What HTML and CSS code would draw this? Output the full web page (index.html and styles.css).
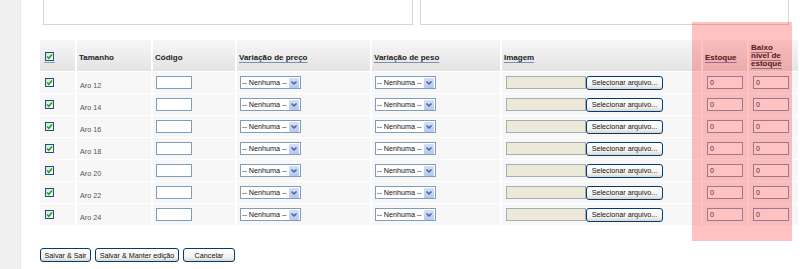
FILE: index.html
```html
<!DOCTYPE html>
<html lang="pt-BR">
  <head>
    <meta charset="UTF-8" />
    <title>Variações</title>
    <link rel="stylesheet" href="styles.css">
  </head>
  <body>
    <div class="page">
      <aside class="rail"></aside>

      <div class="content">
        <div class="boxes">
          <div class="box box-l"></div>
          <div class="box box-r"></div>
        </div>

        <table class="grid">
          <colgroup>
            <col class="c1"><col class="c2"><col class="c3"><col class="c4">
            <col class="c5"><col class="c6"><col class="c7"><col class="c8">
          </colgroup>
          <thead>
            <tr>
              <th class="chk"><span class="chk-link"><span class="cb"><svg viewBox="0 0 9 9" width="9" height="9"><path d="M2 4.5 L3.8 6.3 L7 2.6" fill="none" stroke="#1fa31f" stroke-width="1.6"/></svg></span></span></th>
              <th>Tamanho</th>
              <th>Código</th>
              <th><a class="sort">Variação de preço</a></th>
              <th><a class="sort">Variação de peso</a></th>
              <th><a class="sort">Imagem</a></th>
              <th><a class="sort">Estoque</a></th>
              <th class="low"><a class="sort">Baixo<br>nível de<br>estoque</a></th>
            </tr>
          </thead>
          <tbody>
          </tbody>
        </table>

        <div class="actions">
          <button class="btn b1">Salvar &amp; Sair</button>
          <button class="btn b2">Salvar &amp; Manter edição</button>
          <button class="btn b3">Cancelar</button>
        </div>
      </div>

      <div class="highlight"></div>
    </div>

    <script>
      let elBody = document.querySelector(".grid > tbody");
      let sizes = [12, 14, 16, 18, 20, 22, 24];
      let check = '<span class="cb"><svg viewBox="0 0 9 9" width="9" height="9"><path d="M2 4.5 L3.8 6.3 L7 2.6" fill="none" stroke="#1fa31f" stroke-width="1.6"/></svg></span>';
      let arrow = '<span class="arr"><svg viewBox="0 0 8 6" width="8" height="6"><path d="M1.5 1.5 L4 4 L6.5 1.5" fill="none" stroke="#4d6185" stroke-width="1.5"/></svg></span>';
      let sel = '<span class="sel"><span class="sel-txt">-- Nenhuma --</span>' + arrow + '</span>';
      sizes.forEach(function (size) {
        let tr = document.createElement("tr");
        tr.innerHTML =
          '<td class="chk">' + check + '</td>' +
          '<td class="name">Aro ' + size + '</td>' +
          '<td><input class="txt code" type="text"></td>' +
          '<td>' + sel + '</td>' +
          '<td>' + sel + '</td>' +
          '<td><span class="file"><span class="file-box"></span><span class="file-btn">Selecionar arquivo...</span></span></td>' +
          '<td><input class="txt qty" type="text" value="0"></td>' +
          '<td><input class="txt qty" type="text" value="0"></td>';
        elBody.appendChild(tr);
      });
    </script>
  </body>
</html>
```

FILE: styles.css
```css
body {
  margin: 0;
  background: #fff;
  font-family: "Liberation Sans", Arial, sans-serif;
  overflow: hidden;
}
.page {
  position: relative;
  display: flex;
  height: 269px;
}
.rail {
  width: 20px;
  background: #f0f0f0;
  border-right: 1px solid #e6e6e6;
}
.content {
  flex: 1;
  padding-left: 19px;
}

.boxes {
  display: flex;
  gap: 7px;
  padding-left: 3px;
  height: 25px;
}
.box {
  border: 1px solid #d6d6d6;
  border-top: none;
  box-sizing: border-box;
  height: 25px;
}
.box-l {
  width: 370px;
}
.box-r {
  width: 369px;
}

.grid {
  margin-top: 15px;
  width: 758px;
  table-layout: fixed;
  border-collapse: separate;
  border-spacing: 0;
}
.c1 { width: 35px; }
.c2 { width: 76px; }
.c3 { width: 84px; }
.c4 { width: 135px; }
.c5 { width: 130px; }
.c6 { width: 201px; }
.c7 { width: 46px; }
.c8 { width: 51px; }

.grid th,
.grid td {
  box-sizing: border-box;
  border-left: 2px solid #fff;
  border-bottom: 1px solid #fff;
  padding: 0 0 0 3px;
  text-align: left;
  white-space: nowrap;
}
.grid th:first-child,
.grid td:first-child {
  border-left: none;
  padding-left: 5px;
}
.grid th {
  height: 32px;
  background: linear-gradient(#f7f7f7, #e3e3e3);
  font-size: 8px;
  font-weight: bold;
  color: #222;
  padding-left: 2px;
  padding-top: 3px;
  vertical-align: middle;
}
.grid th.low {
  line-height: 8px;
  padding-top: 1px;
}
.grid td {
  height: 22px;
  background: #f7f7f7;
  font-size: 7.2px;
  color: #555;
  vertical-align: middle;
}
.grid td.name {
  padding-top: 5px;
}

.sort {
  text-decoration: underline;
  text-decoration-color: #7b8fb3;
  text-underline-offset: 2px;
}

.chk-link {
  display: inline-block;
  padding: 0 1px 1px;
  border-bottom: 1px solid #8a9cbc;
  margin-left: -1px;
}
.cb {
  display: inline-block;
  width: 9px;
  height: 9px;
  box-sizing: border-box;
  border: 1px solid #1c5180;
  background: linear-gradient(135deg, #dcdcd7, #fff);
  vertical-align: middle;
}
.cb svg {
  display: block;
  margin: -1px 0 0 -1px;
}

.txt {
  box-sizing: border-box;
  height: 13px;
  border: 1px solid #7f9db9;
  background: #fff;
  padding: 0 2px;
  margin: 0;
  font: 7.2px "Liberation Sans", Arial, sans-serif;
  color: #333;
  vertical-align: middle;
}
.code {
  width: 36px;
}
.qty {
  width: 36px;
  margin-left: 1px;
}

.sel {
  display: inline-flex;
  align-items: center;
  box-sizing: border-box;
  width: 61px;
  height: 13px;
  border: 1px solid #7f9db9;
  background: #fff;
  vertical-align: middle;
}
.sel-txt {
  flex: 1;
  font-size: 7.2px;
  color: #111;
  padding-left: 1px;
}
.arr {
  display: flex;
  align-items: center;
  justify-content: center;
  width: 10px;
  height: 10px;
  margin-right: 1px;
  background: linear-gradient(#d2dffc, #b3c8f4);
  border-radius: 1px;
}

.file {
  display: inline-flex;
  align-items: center;
  vertical-align: middle;
  margin-left: 1px;
}
.file-box {
  box-sizing: border-box;
  width: 80px;
  height: 13px;
  border: 1px solid #a5acb2;
  background: #ece9d8;
}
.file-btn {
  box-sizing: border-box;
  width: 77px;
  height: 14px;
  line-height: 12px;
  border: 1px solid #003c74;
  border-radius: 3px;
  background: linear-gradient(#fff, #f3f2ee 70%, #d9d5cb);
  font-size: 7.2px;
  color: #111;
  text-align: center;
}

.actions {
  display: flex;
  gap: 4px;
  margin-top: 22px;
}
.btn {
  box-sizing: border-box;
  height: 14px;
  padding: 0;
  border: 1px solid #003c74;
  border-radius: 3px;
  background: linear-gradient(#fff, #f3f2ee 70%, #d9d5cb);
  font: 7.2px "Liberation Sans", Arial, sans-serif;
  color: #111;
}
.b1 { width: 51px; }
.b2 { width: 84px; }
.b3 { width: 52px; }

.highlight {
  position: absolute;
  left: 692px;
  top: 22px;
  width: 100px;
  height: 219px;
  background: rgba(255, 0, 0, 0.24);
  pointer-events: none;
}
```
